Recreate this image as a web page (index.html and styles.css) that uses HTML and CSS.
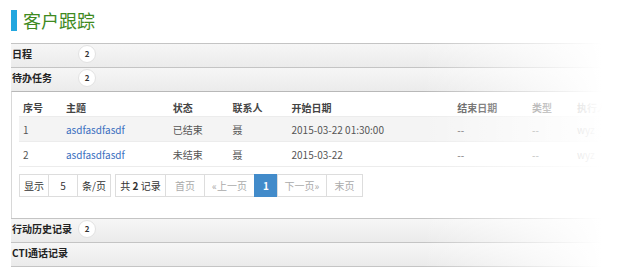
FILE: index.html
```html
<!DOCTYPE html>
<html lang="zh-CN">
	<head>
		<meta charset="UTF-8">
		<title>客户跟踪</title>
		<link rel="stylesheet" href="styles.css">
	</head>
	<body>
		<div class="page">
			<h2 class="title"><span class="bar"></span>客户跟踪</h2>

			<div class="panel">
				<div class="panel-head"><span class="label">日程</span><span class="badge">2</span></div>
			</div>

			<div class="panel">
				<div class="panel-head"><span class="label">待办任务</span><span class="badge">2</span></div>
				<div class="panel-body">
					<table class="grid">
						<tr>
							<th class="c-no">序号</th>
							<th class="c-subj">主题</th>
							<th class="c-st">状态</th>
							<th class="c-man">联系人</th>
							<th class="c-start">开始日期</th>
							<th class="c-end">结束日期</th>
							<th class="c-type">类型</th>
							<th>执行人</th>
						</tr>
						<tr class="odd">
							<td>1</td>
							<td><a href="#">asdfasdfasdf</a></td>
							<td>已结束</td>
							<td>聂</td>
							<td>2015-03-22 01:30:00</td>
							<td>--</td>
							<td>--</td>
							<td>wyz</td>
						</tr>
						<tr>
							<td>2</td>
							<td><a href="#">asdfasdfasdf</a></td>
							<td>未结束</td>
							<td>聂</td>
							<td>2015-03-22</td>
							<td>--</td>
							<td>--</td>
							<td>wyz</td>
						</tr>
					</table>

					<div class="pager">
						<ul class="pg">
							<li class="w30">显示</li><li class="w29">5</li><li class="w33">条/页</li>
						</ul>
						<ul class="pg">
							<li class="w51">共 <b>2</b> 记录</li>
							<li class="w39 off">首页</li>
							<li class="w50 off">«上一页</li>
							<li class="w23 cur">1</li>
							<li class="w49 off">下一页»</li>
							<li class="w36 off">末页</li>
						</ul>
					</div>
				</div>
			</div>

			<div class="panel">
				<div class="panel-head"><span class="label">行动历史记录</span><span class="badge">2</span></div>
			</div>
			<div class="panel">
				<div class="panel-head last"><span class="label">CTI通话记录</span></div>
			</div>
		</div>
		<div class="fade"></div>
	</body>
</html>
```

FILE: styles.css
```css
body {
	margin: 0;
	font-family: "Noto Sans CJK SC", "Liberation Sans", sans-serif;
	font-size: 10px;
	color: #333;
	background: #fff;
}
.page {
	padding: 9px 11px 0 11px;
}
.title {
	display: flex;
	align-items: center;
	gap: 6px;
	margin: 0 0 12px 0;
	height: 22px;
	font-size: 18px;
	font-weight: normal;
	color: #3f8a1f;
	line-height: 22px;
}
.title .bar {
	display: inline-block;
	width: 6px;
	height: 21px;
	background: #22a7df;
}
.panel-head {
	box-sizing: border-box;
	display: flex;
	align-items: center;
	height: 24px;
	padding: 0 0 4px 1px;
	border-top: 1px solid #c4c4c4;
	background: linear-gradient(#f6f6f6, #ebebeb);
	font-weight: bold;
	font-size: 10px;
	color: #222;
}
.panel-head.last {
	height: 25px;
	border-bottom: 1px solid #c4c4c4;
}
.panel-head .label {
	width: 66px;
	white-space: nowrap;
}
.badge {
	display: inline-flex;
	align-items: center;
	justify-content: center;
	width: 16px;
	height: 16px;
	border-radius: 50%;
	background: #fff;
	border: 1px solid #e2e2e2;
	font-size: 8px;
	color: #333;
}
.panel-body {
	border-left: 1px solid #d8d8d8;
	border-top: 1px solid #b8b8b8;
	padding: 6px 0 21px 7px;
}
.grid {
	width: 592px;
	border-collapse: collapse;
	white-space: nowrap;
}
.grid th {
	text-align: left;
	font-weight: bold;
	color: #444;
	height: 18px;
	padding: 0 4px;
}
.grid td {
	height: 24px;
	padding: 0 4px;
	border-top: 1px solid #ececec;
	color: #555;
}
.grid tr.odd td {
	background: #f4f4f4;
}
.grid tr:last-child td {
	border-bottom: 1px solid #ececec;
}
.grid a {
	color: #3a6fc0;
	text-decoration: none;
}
.c-no { width: 35px; }
.c-subj { width: 99px; }
.c-st { width: 52px; }
.c-man { width: 51px; }
.c-start { width: 158px; }
.c-end { width: 67px; }
.c-type { width: 37px; }
.pager {
	display: flex;
	gap: 4px;
	margin-top: 7px;
}
.pg {
	display: flex;
	list-style: none;
	margin: 0;
	padding: 0;
}
.pg li {
	box-sizing: border-box;
	height: 23px;
	line-height: 21px;
	text-align: center;
	border: 1px solid #ddd;
	margin-left: -1px;
	color: #333;
	background: #fff;
	white-space: nowrap;
}
.pg li:first-child {
	margin-left: 0;
}
.w23 { width: 24px; }
.w29 { width: 30px; }
.w30 { width: 30px; }
.w33 { width: 34px; }
.w36 { width: 37px; }
.w39 { width: 40px; }
.w49 { width: 50px; }
.w50 { width: 51px; }
.w51 { width: 51px; }
.pg li.off {
	color: #aaa;
}
.pg li.cur {
	background: #428bca;
	border-color: #428bca;
	color: #fff;
	font-weight: bold;
}
.fade {
	position: absolute;
	top: 0;
	right: 0;
	width: 200px;
	height: 276px;
	background: linear-gradient(to right, rgba(255,255,255,0), #fff 90%);
}
```
